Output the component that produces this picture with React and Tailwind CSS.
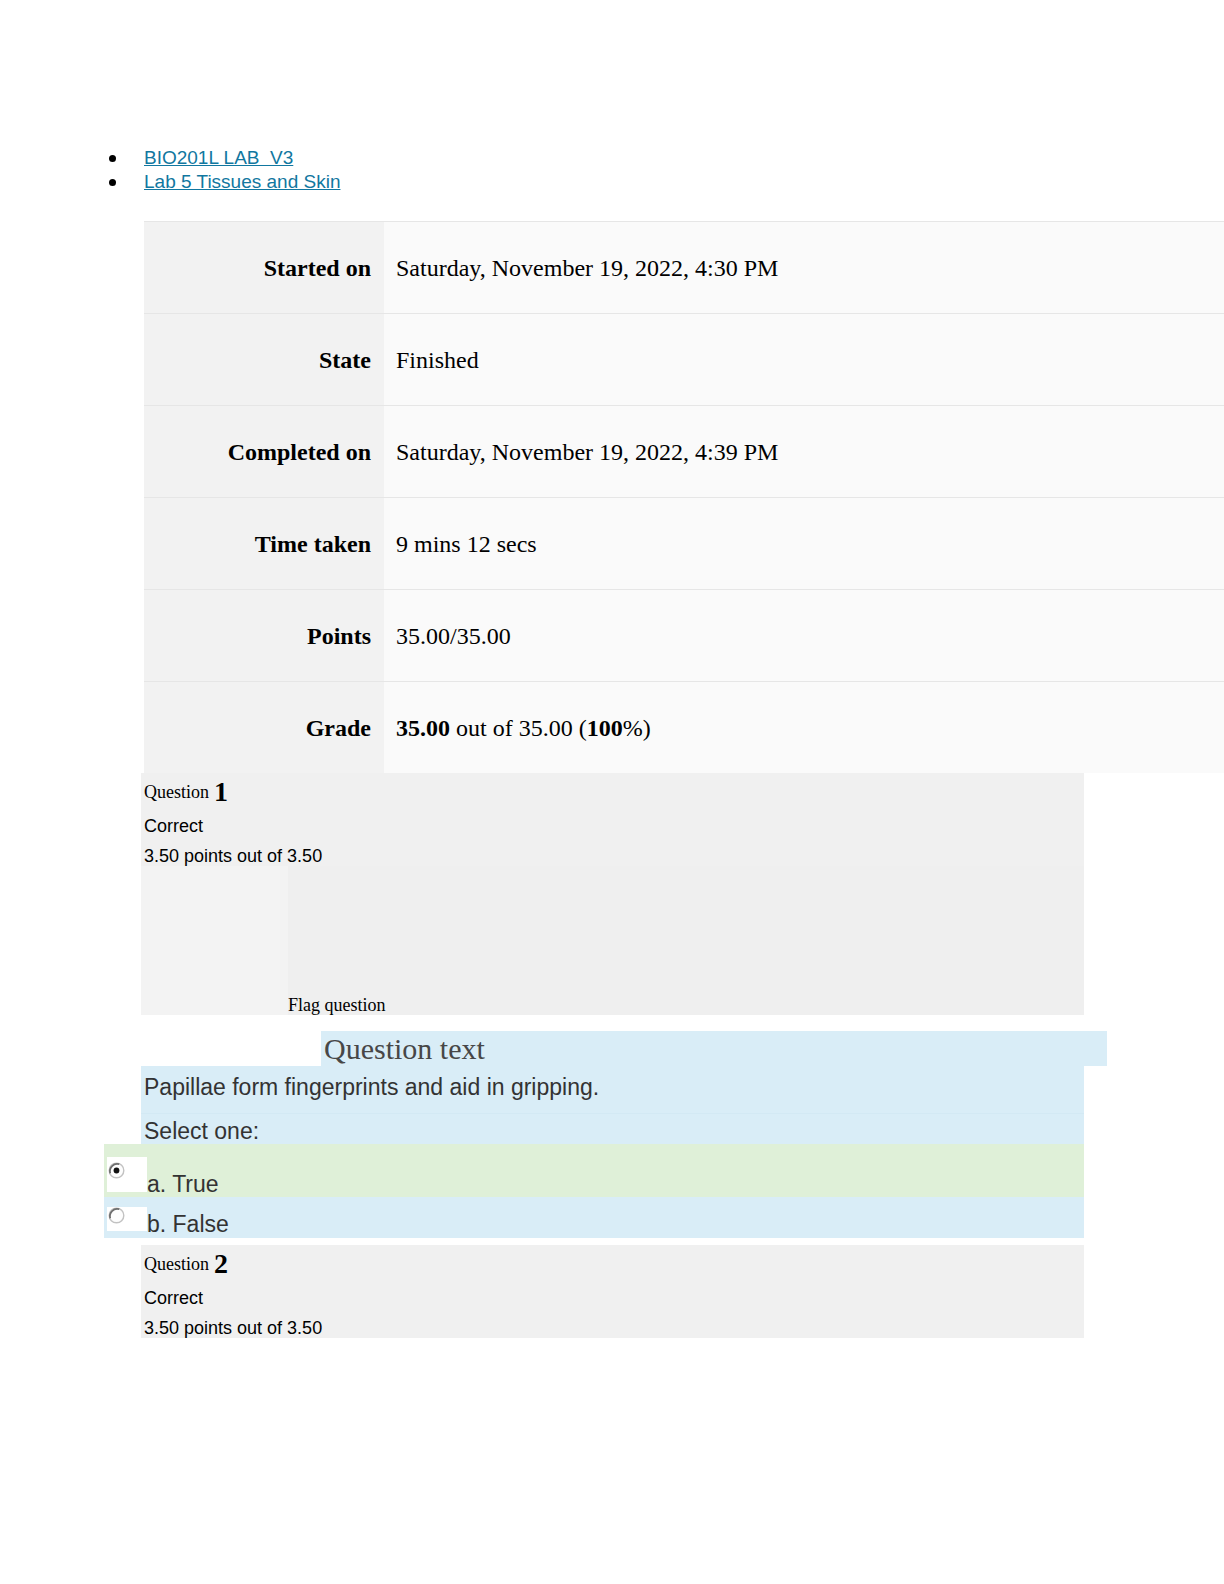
const serif = "font-['Liberation_Serif','Times_New_Roman',serif]";
const sans = "font-['Liberation_Sans',Arial,sans-serif]";

const summary = [
  { label: "Started on", value: "Saturday, November 19, 2022, 4:30 PM" },
  { label: "State", value: "Finished" },
  { label: "Completed on", value: "Saturday, November 19, 2022, 4:39 PM" },
  { label: "Time taken", value: "9 mins 12 secs" },
  { label: "Points", value: "35.00/35.00" },
  {
    label: "Grade",
    value: (
      <>
        <b>35.00</b>{" "}out of 35.00 (<b>100</b>%)
      </>
    ),
  },
];

function Radio({ checked }) {
  return (
    <svg width="18" height="18" viewBox="0 0 18 18">
      <circle cx="8.5" cy="8.5" r="7.3" fill="#fdfdfd" stroke="#c2c2c2" strokeWidth="1.4" />
      <path d="M2.2 11.2 A7.3 7.3 0 0 1 11.2 2.2" fill="none" stroke="#6e6e6e" strokeWidth="1.8" />
      {checked && <circle cx="8.5" cy="8.5" r="2.9" fill="#111" />}
    </svg>
  );
}

function QuestionHead({ n }) {
  return (
    <>
      <div className={`h-[38px] flex items-center pl-[3px] text-black ${serif}`}>
        <span className="text-[18px]">Question</span>
        <span className="text-[28px] font-bold ml-[5px] leading-none">{n}</span>
      </div>
      <div className={`h-[30px] flex items-center pl-[3px] text-[18px] text-black ${sans}`}>Correct</div>
      <div className={`h-[25px] flex items-end pl-[3px] text-[18px] leading-[20px] text-black ${sans}`}>
        3.50 points out of 3.50
      </div>
    </>
  );
}

export default function App() {
  return (
    <div className="min-h-[1584px] w-[1224px] bg-white pt-[146px] overflow-hidden">
      <ul className={`text-[19px] ${sans}`}>
        {["BIO201L LAB  V3", "Lab 5 Tissues and Skin"].map((t) => (
          <li key={t} className="h-[24px] flex items-center">
            <span className="ml-[109px] mr-[28px] w-[7px] h-[7px] rounded-full bg-black" />
            <a href="#" className="text-[#1177a0] underline whitespace-pre">
              {t}
            </a>
          </li>
        ))}
      </ul>

      <div className="mt-[27px] ml-[144px]">
        {summary.map((r) => (
          <div key={r.label} className="flex h-[92px] border-t border-[#e6e6e6]">
            <div className={`w-[240px] bg-[#f2f2f2] flex items-center justify-end pr-[13px] text-[24px] font-bold text-black ${serif}`}>
              {r.label}
            </div>
            <div className={`flex-1 bg-[#fafafa] flex items-center pl-[12px] text-[24px] text-black ${serif}`}>
              <span>{r.value}</span>
            </div>
          </div>
        ))}
      </div>

      <div className="ml-[141px] w-[943px] bg-[#f0f0f0]">
        <QuestionHead n="1" />
        <div className="flex h-[149px]">
          <div className="w-[147px] bg-[#f3f3f3]" />
          <div className={`flex-1 bg-[#efefef] flex items-end text-[18px] leading-[20px] text-black ${serif}`}>
            Flag question
          </div>
        </div>
      </div>

      <div className={`mt-[16px] ml-[321px] w-[786px] h-[35px] bg-[#d9edf7] pl-[3px] text-[30px] leading-[35px] text-[#474747] ${serif}`}>
        Question text
      </div>
      <div className={`ml-[141px] w-[943px] h-[47px] bg-[#d9edf7] flex items-center pl-[3px] pb-[5px] text-[23px] text-[#333] ${sans}`}>
        Papillae form fingerprints and aid in gripping.
      </div>
      <div className={`ml-[141px] w-[943px] h-[31px] bg-[#d9edf7] border-t border-[#d3e9f4] flex items-end pl-[3px] text-[23px] leading-[26px] text-[#333] ${sans}`}>
        Select one:
      </div>

      <div className={`ml-[104px] w-[980px] h-[53px] bg-[#dff0d8] flex items-end text-[23px] text-[#333] ${sans}`}>
        <div className="ml-[3px] mb-[5px] w-[40px] h-[35px] bg-white pl-[1px] pt-[5px]">
          <Radio checked />
        </div>
        <span className="leading-[26px]">a. True</span>
      </div>
      <div className={`ml-[104px] w-[980px] h-[41px] bg-[#d9edf7] flex items-end text-[23px] text-[#333] ${sans}`}>
        <div className="ml-[3px] mb-[7px] w-[40px] h-[24px] bg-white pl-[1px]">
          <Radio />
        </div>
        <span className="leading-[28px]">b. False</span>
      </div>

      <div className="mt-[7px] ml-[141px] w-[943px] bg-[#f0f0f0]">
        <QuestionHead n="2" />
      </div>
    </div>
  );
}
